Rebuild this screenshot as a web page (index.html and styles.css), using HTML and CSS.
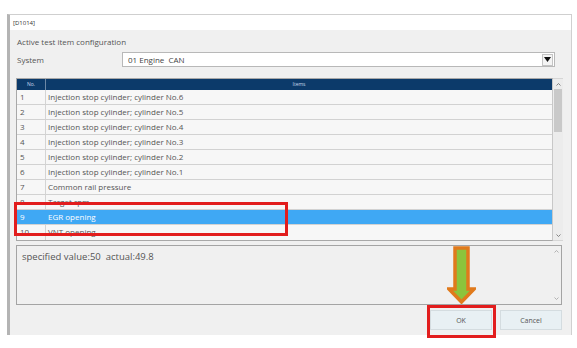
FILE: index.html
```html
<!DOCTYPE html>
<html>
<head>
<meta charset="utf-8">
<link rel="stylesheet" href="styles.css">
</head>
<body>
<div class="dialog">
  <div class="titlebar">[D1014]</div>
  <div class="panel">
    <div class="heading">Active test item configuration</div>
    <div class="system-row">
      <span class="label">System</span>
      <div class="combo">
        <span class="combo-text">01 Engine&nbsp; CAN</span>
        <span class="drop"><svg width="7" height="5" viewBox="0 0 7 5"><path d="M0 0H7L3.5 5Z" fill="#111"/></svg></span>
      </div>
    </div>
    <div class="grid-wrap">
      <div class="grid">
        <div class="head"><div class="c-no">No.</div><div class="c-item">Items</div></div>
        <div class="row"><div class="c-no">1</div><div class="c-item">Injection stop cylinder; cylinder No.6</div></div>
        <div class="row"><div class="c-no">2</div><div class="c-item">Injection stop cylinder; cylinder No.5</div></div>
        <div class="row"><div class="c-no">3</div><div class="c-item">Injection stop cylinder; cylinder No.4</div></div>
        <div class="row"><div class="c-no">4</div><div class="c-item">Injection stop cylinder; cylinder No.3</div></div>
        <div class="row"><div class="c-no">5</div><div class="c-item">Injection stop cylinder; cylinder No.2</div></div>
        <div class="row"><div class="c-no">6</div><div class="c-item">Injection stop cylinder; cylinder No.1</div></div>
        <div class="row"><div class="c-no">7</div><div class="c-item">Common rail pressure</div></div>
        <div class="row"><div class="c-no">8</div><div class="c-item">Target rpm</div></div>
        <div class="row selected"><div class="c-no">9</div><div class="c-item">EGR opening</div></div>
        <div class="row"><div class="c-no">10</div><div class="c-item">VNT opening</div></div>
      </div>
      <div class="vscroll">
        <span class="arr"><svg width="5" height="3" viewBox="0 0 5 3"><path d="M0.5 2.5L2.5 0.5L4.5 2.5" stroke="#777" fill="none" stroke-width="0.9"/></svg></span>
        <span class="track"><span class="thumb"></span></span>
        <span class="arr"><svg width="5" height="3" viewBox="0 0 5 3"><path d="M0.5 0.5L2.5 2.5L4.5 0.5" stroke="#777" fill="none" stroke-width="0.9"/></svg></span>
      </div>
    </div>
    <div class="result">
      <span class="result-text">specified value:50&nbsp; actual:49.8</span>
      <span class="result-scroll">
        <svg width="5" height="3" viewBox="0 0 5 3"><path d="M0.5 2.5L2.5 0.5L4.5 2.5" stroke="#aaa" fill="none" stroke-width="0.9"/></svg>
        <svg width="5" height="3" viewBox="0 0 5 3"><path d="M0.5 0.5L2.5 2.5L4.5 0.5" stroke="#aaa" fill="none" stroke-width="0.9"/></svg>
      </span>
    </div>
    <div class="buttons">
      <button class="btn">OK</button>
      <button class="btn">Cancel</button>
    </div>
  </div>
</div>
<div class="mark mark-row"></div>
<div class="mark mark-ok"></div>
<svg class="arrow" width="29" height="58" viewBox="0 0 29 58">
  <path d="M8 2H21V43H27L14.5 56L2 43H8Z" fill="#8cc43c" stroke="#e07a1c" stroke-width="3.5" stroke-linejoin="miter"/>
</svg>
</body>
</html>
```
FILE: styles.css
```css
html, body {
  margin: 0;
  padding: 0;
  background: #ffffff;
}
body {
  width: 577px;
  height: 348px;
  position: relative;
  overflow: hidden;
  font-family: "Open Sans", "Noto Sans", sans-serif;
  color: #555;
}
.dialog {
  margin: 14px 0 0 7px;
  width: 561px;
  border-left: 3px solid #b4b4b4;
  border-right: 1px solid #d0d0d0;
  border-top: 1px solid #cfcfcf;
}
.titlebar {
  height: 15px;
  background: #fff;
  font-size: 6px;
  line-height: 16px;
  padding-left: 3px;
  color: #333;
}
.panel {
  background: #f0f0f0;
  padding: 0 8px 5px 6px;
}
.heading {
  padding-top: 6px;
  height: 12px;
  line-height: 12px;
  font-size: 8px;
  padding-left: 1px;
  color: #555;
}
.system-row {
  margin-top: 4px;
  display: flex;
  align-items: center;
  height: 15px;
}
.label {
  width: 105px;
  padding-left: 1px;
  font-size: 8px;
  color: #555;
}
.combo {
  flex: none;
  width: 431px;
  height: 13px;
  background: #fff;
  border: 1px solid #b8b8b8;
  display: flex;
  align-items: center;
  justify-content: space-between;
}
.combo-text {
  font-size: 8px;
  padding-left: 5px;
  color: #444;
}
.drop {
  width: 9px;
  height: 10px;
  margin-right: 1px;
  border: 1px solid #c4c4c4;
  background: #f4f4f4;
  display: flex;
  align-items: center;
  justify-content: center;
}
.grid-wrap {
  margin-top: 11px;
  display: flex;
  height: 163px;
}
.grid {
  flex: 1;
  border: 1px solid #a8a8a8;
  border-right: 1px solid #c8c8c8;
  background: #f7f7f7;
}
.head {
  display: flex;
  height: 11px;
  background: #0c3a6a;
  color: #c8d8ea;
  font-size: 5px;
  line-height: 11px;
}
.head .c-no {
  text-align: center;
  border-right: 1px solid #6d88a6;
  padding-left: 0;
}
.head .c-item {
  text-align: center;
  padding-left: 0;
}
.c-no {
  width: 29px;
  flex: none;
  padding-left: 3px;
  box-sizing: border-box;
  border-right: 1px solid #d4d4d4;
}
.c-item {
  flex: 1;
  padding-left: 2px;
}
.row {
  display: flex;
  height: 15px;
  box-sizing: border-box;
  border-bottom: 1px solid #d2d2d2;
  font-size: 8px;
  line-height: 14px;
  color: #555;
}
.row:last-child {
  border-bottom: none;
}
.row.selected {
  background: #3fa8f4;
  color: #fff;
}
.row.selected .c-no {
  border-right-color: #3fa8f4;
}
.vscroll {
  width: 10px;
  display: flex;
  flex-direction: column;
  background: #ececec;
  border-top: 1px solid #d6d6d6;
  border-bottom: 1px solid #d6d6d6;
}
.arr {
  height: 10px;
  display: flex;
  align-items: center;
  justify-content: center;
}
.track {
  flex: 1;
  display: flex;
  flex-direction: column;
}
.thumb {
  margin: 0 1px;
  height: 43px;
  background: #c9c9c9;
}
.result {
  margin-top: 4px;
  margin-right: 1px;
  height: 58px;
  border: 1px solid #a4a4a4;
  display: flex;
  justify-content: space-between;
}
.result-text {
  font-size: 9.5px;
  padding: 4px 0 0 5px;
  color: #555;
}
.result-scroll {
  width: 10px;
  display: flex;
  flex-direction: column;
  justify-content: space-between;
  align-items: center;
  padding: 4px 0 4px;
}
.buttons {
  margin-top: 5px;
  margin-right: 1px;
  display: flex;
  justify-content: flex-end;
  gap: 8px;
}
.btn {
  width: 62px;
  height: 20px;
  margin: 0;
  padding: 0;
  background: #e8f0f4;
  border: 1px solid #d4dce0;
  font-family: "Open Sans", "Noto Sans", sans-serif;
  font-size: 7px;
  color: #555;
}
.mark {
  position: absolute;
  border: 3px solid #e21d1d;
  box-sizing: border-box;
}
.mark-row {
  left: 14px;
  top: 202px;
  width: 274px;
  height: 34px;
}
.mark-ok {
  left: 427px;
  top: 305px;
  width: 69px;
  height: 33px;
}
.arrow {
  position: absolute;
  left: 447px;
  top: 246px;
}
```
